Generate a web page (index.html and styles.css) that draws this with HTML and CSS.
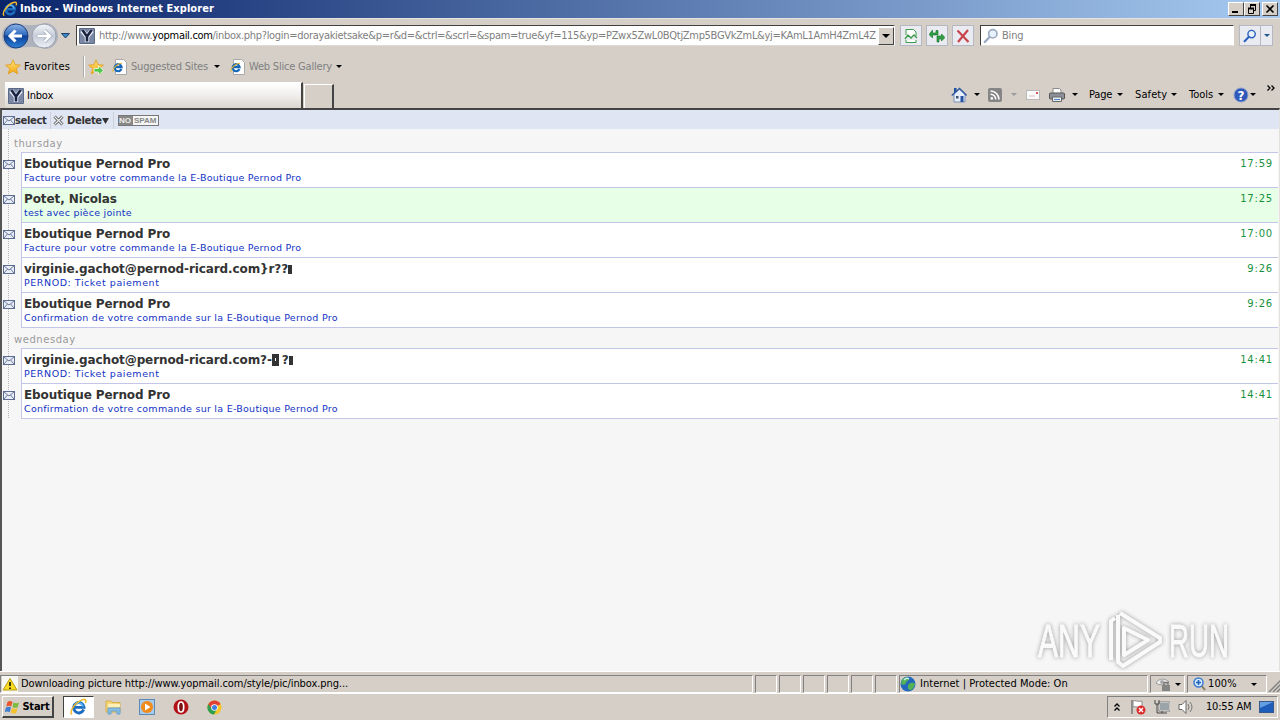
FILE: index.html
```html
<!DOCTYPE html>
<html lang="en">
<head>
    <meta charset="UTF-8">
    <meta name="viewport" content="width=device-width, initial-scale=1.0">
    <title>Inbox - Windows Internet Explorer</title>
    <link rel="stylesheet" href="styles.css">
</head>
<body>
    <!-- Shared icons -->
    <svg class="defs" width="0" height="0">
        <defs>
            <linearGradient id="blue-ball" x1="0" y1="0" x2="0" y2="1">
                <stop offset="0" stop-color="#8db4e6"/>
                <stop offset="0.45" stop-color="#2f6ac0"/>
                <stop offset="0.5" stop-color="#0d3f98"/>
                <stop offset="1" stop-color="#2c83d8"/>
            </linearGradient>
            <linearGradient id="pale-ball" x1="0" y1="0" x2="0" y2="1">
                <stop offset="0" stop-color="#f4f6fa"/>
                <stop offset="0.5" stop-color="#c5ccd8"/>
                <stop offset="1" stop-color="#eef1f6"/>
            </linearGradient>
            <linearGradient id="gold" x1="0" y1="0" x2="0" y2="1">
                <stop offset="0" stop-color="#ffe680"/>
                <stop offset="1" stop-color="#f5a40c"/>
            </linearGradient>
        </defs>
        <symbol id="ie" viewBox="0 0 16 16">
            <path d="M12.6 10.3A4.6 4.6 0 1 1 12.9 8.3H4.6" fill="none" stroke="#1d6cc0" stroke-width="2.6"/>
            <path d="M12 7.6A4 4 0 0 0 4.6 6.4" fill="none" stroke="#59b5ee" stroke-width="1.4"/>
            <path d="M2.2 14.6C-1 12 6 2.6 12.4 1.3 14.6.9 15 2.4 14 4.4" fill="none" stroke="#f0b92c" stroke-width="1.4"/>
        </symbol>
        <symbol id="ypage" viewBox="0 0 16 16">
            <rect width="16" height="16" rx="1" fill="#5c6a88"/>
            <rect x="1" y="1" width="14" height="14" fill="#7a88a6"/>
            <path d="M3 2.5L8 8.5L13 2.5M8 8V14" fill="none" stroke="#e8edf6" stroke-width="4.4"/>
            <path d="M3.4 2L8 8.5L12.6 2M8 8V13.6" fill="none" stroke="#1a2440" stroke-width="2.6"/>
        </symbol>
        <symbol id="iepage" viewBox="0 0 16 16">
            <path d="M3.5 .5h8l3 3v12h-11z" fill="#fff" stroke="#a8a8a8"/>
            <path d="M9.4 10A3.5 3.5 0 1 1 9.6 8.2H3.4" fill="none" stroke="#1767b8" stroke-width="2.2"/>
            <path d="M1.2 12.6C-.4 10 6 4 10 4.2" fill="none" stroke="#e9b32a" stroke-width="1.1"/>
        </symbol>
        <symbol id="star" viewBox="0 0 16 16">
            <path d="M8 .8l2.1 4.9 5.3.4-4 3.5 1.3 5.3L8 12l-4.7 2.9 1.3-5.3-4-3.5 5.3-.4z" fill="url(#gold)" stroke="#e09c1c" stroke-width=".8"/>
        </symbol>
        <symbol id="envelope" viewBox="0 0 12 9">
            <rect x=".5" y=".5" width="11" height="8" fill="#e8edf7" stroke="#5d6d92"/>
            <path d="M1 1l5 4 5-4M1 8l3.5-4M11 8L7.5 4" fill="none" stroke="#5d6d92" stroke-width=".9"/>
        </symbol>
        <symbol id="lens" viewBox="0 0 16 16">
            <circle cx="9.8" cy="5.8" r="4.2" fill="#e8f2fc" stroke="currentColor" stroke-width="1.6"/>
            <path d="M6.6 9L1.8 14" stroke="currentColor" stroke-width="2.4" stroke-linecap="round"/>
        </symbol>
    </svg>

    <div class="titlebar">
        <svg class="icon"><use href="#ie"/></svg>
        <span class="title">Inbox - Windows Internet Explorer</span>
        <div class="window-buttons">
            <button><svg width="12" height="10"><path d="M2 8h6" stroke="#000" stroke-width="2"/></svg></button>
            <button><svg width="12" height="10"><path d="M4 1h6M2 4.5h6" stroke="#000" stroke-width="2"/><path d="M4.5 1v3M9.5 1v5.5H8M2.5 4v5.5h5V4" fill="none" stroke="#000"/></svg></button>
            <button class="close"><svg width="12" height="10"><path d="M2.5 1.5l7 7M9.5 1.5l-7 7" stroke="#000" stroke-width="1.6"/></svg></button>
        </div>
    </div>

    <div class="navbar">
        <svg class="travel" width="58" height="28" viewBox="0 0 58 28">
            <path d="M13 1C26 4 32 4 43 1A13 13 0 0 1 43 27C32 24 26 24 13 27A13 13 0 0 1 13 1" fill="#aeb2bd"/>
            <circle cx="14" cy="14" r="12" fill="url(#blue-ball)" stroke="#1f3f7c"/>
            <path d="M20 14H9M13.500 8.500L8 14l5.500 5.500" fill="none" stroke="#fff" stroke-width="3"/>
            <circle cx="42" cy="14" r="12" fill="url(#pale-ball)" stroke="#9aa0ae"/>
            <path d="M36 14h11M42.500 8.500L48 14l-5.500 5.500" fill="none" stroke="#a9b1c0" stroke-width="4"/>
            <path d="M36 14h11M42.500 8.500L48 14l-5.500 5.500" fill="none" stroke="#fff" stroke-width="2.400"/>
        </svg>
        <svg class="recent" width="10" height="6"><path d="M.5.500h8L4.500 5z" fill="#3c86c4" stroke="#1c466f"/></svg>
        <div class="address">
            <svg class="icon"><use href="#ypage"/></svg>
            <span class="url">http://www.<b>yopmail.com</b>/inbox.php?login=dorayakietsake&amp;p=r&amp;d=&amp;ctrl=&amp;scrl=&amp;spam=true&amp;yf=115&amp;yp=PZwx5ZwL0BQtjZmp5BGVkZmL&amp;yj=KAmL1AmH4ZmL4Z</span>
            <button class="drop"><i class="arrow"></i></button>
        </div>
        <button class="nav-button"><svg class="icon" viewBox="0 0 16 16"><path d="M3 7V1.500h7.500L13 4v4M3 12v2.500h10V12" fill="#fff" stroke="#3c9a4a"/><path d="M2 11l3-4 3 3 3-3 3 3" fill="none" stroke="#3c9a4a" stroke-width="1.300"/></svg></button>
        <button class="nav-button"><svg class="icon" viewBox="0 0 16 16"><path d="M0 6.500L3.500 2v3H7V2.500h2V7H3.500v3zM16 9.500L12.500 6v2H8v6h2v-3h2.500v2z" fill="#2fa044" stroke="#16702a" stroke-width=".6"/></svg></button>
        <button class="nav-button"><svg class="icon" viewBox="0 0 16 16"><path d="M2.500 2.500l11 11.500M13 2L3 14" stroke="#c8434a" stroke-width="2.200"/></svg></button>
        <div class="search">
            <svg class="icon"><use href="#lens"/></svg>
            <span>Bing</span>
        </div>
        <button class="nav-button go"><svg class="icon"><use href="#lens"/></svg></button>
        <button class="nav-button more"><i class="arrow"></i></button>
    </div>

    <div class="favorites">
        <svg class="icon"><use href="#star"/></svg>
        <span class="fav-label">Favorites</span>
        <i class="divider"></i>
        <svg class="icon add" viewBox="0 0 16 16"><use href="#star"/><path d="M6 9.500h4.500V7l5 4.500-5 4.500v-3H6z" fill="#4fc94b" stroke="#fff" stroke-width=".7"/></svg>
        <svg class="icon sites-icon"><use href="#iepage"/></svg>
        <span class="sites">Suggested Sites</span><i class="arrow"></i>
        <svg class="icon slices-icon"><use href="#iepage"/></svg>
        <span class="slices">Web Slice Gallery</span><i class="arrow"></i>
    </div>

    <div class="tabs">
        <div class="tab">
            <svg class="icon"><use href="#ypage"/></svg>
            <span>Inbox</span>
        </div>
        <div class="new-tab"></div>
        <div class="commands">
            <svg class="icon home" viewBox="0 0 16 16"><path d="M3 7v8h11V7L8.500 2z" fill="#e6effb" stroke="#7c8fb8"/><path d="M.8 8.500L8.500 1.500 15.500 8.500" fill="none" stroke="#355a9e" stroke-width="1.600"/><path d="M3 1h2.500v3L3 6zM9.500 9h3v6h-3z" fill="#2452a0"/><path d="M5 9h2.500v2.500H5z" fill="#3c4e78"/></svg><i class="arrow a1"></i>
            <svg class="feed" width="14" height="14" viewBox="0 0 14 14"><rect width="14" height="14" rx="2" fill="#858585"/><circle cx="3.800" cy="10.400" r="1.300" fill="#fff"/><path d="M2.500 6.300a5 5 0 0 1 5.200 5.200M2.500 3a8.500 8.500 0 0 1 8.500 8.500" fill="none" stroke="#fff" stroke-width="1.600"/></svg><i class="arrow dim a2"></i>
            <svg class="mail" width="14" height="10"><rect x=".5" y=".5" width="13" height="9" fill="#fafafa" stroke="#b9b9b9"/><path d="M3 6h6" stroke="#e0c0c0"/><path d="M10 2h2v2h-2z" fill="#cc5a5a"/></svg>
            <svg class="icon print" viewBox="0 0 16 16"><path d="M4 6V1.500h6.500L12 3v3" fill="#fff" stroke="#8a8a8a"/><rect x=".5" y="6" width="15" height="6" rx="1" fill="#8b9098" stroke="#555"/><path d="M3.500 10h9v4.500h-9z" fill="#e9eef4" stroke="#666"/><path d="M5 12.500h6" stroke="#4a86c8"/></svg><i class="arrow a3"></i>
            <span class="page">Page</span><i class="arrow a4"></i>
            <span class="safety">Safety</span><i class="arrow a5"></i>
            <span class="tools">Tools</span><i class="arrow a6"></i>
            <svg class="icon help" viewBox="0 0 16 16"><circle cx="8" cy="8" r="7" fill="#2f58bb" stroke="#8a9ccc"/><text x="8" y="12.500" text-anchor="middle">?</text></svg><i class="arrow a7"></i>
            <svg class="chevrons" width="8" height="6"><path d="M.5.500L3 3 .5 5.500M4.500.500L7 3 4.500 5.500" fill="none" stroke="#000" stroke-width="1.300"/></svg>
        </div>
    </div>

    <main class="viewport">
        <div class="mail-toolbar">
            <svg class="env"><use href="#envelope"/></svg>
            <b class="select">select</b>
            <i class="sep"></i>
            <svg class="cross" width="11" height="11"><path d="M1.500 1.500l8 8M9.500 1.500l-8 8" stroke="#555" stroke-width="3"/><path d="M1.500 1.500l8 8M9.500 1.500l-8 8" stroke="#eee" stroke-width="1.200"/></svg>
            <b class="delete">Delete</b>
            <svg class="down" width="7" height="6"><path d="M0 0h7L3.500 6z" fill="#333"/></svg>
            <i class="sep"></i>
            <span class="nospam"><span>NO</span><em>SPAM</em></span>
        </div>
        <div class="list">
            <h2>thursday</h2>
            <div class="message">
                <svg class="env"><use href="#envelope"/></svg>
                <div class="body"><b>Eboutique Pernod Pro</b><time>17:59</time><p>Facture pour votre commande la E-Boutique Pernod Pro</p></div>
            </div>
            <div class="message active">
                <svg class="env"><use href="#envelope"/></svg>
                <div class="body"><b>Potet, Nicolas</b><time>17:25</time><p>test avec pièce jointe</p></div>
            </div>
            <div class="message">
                <svg class="env"><use href="#envelope"/></svg>
                <div class="body"><b>Eboutique Pernod Pro</b><time>17:00</time><p>Facture pour votre commande la E-Boutique Pernod Pro</p></div>
            </div>
            <div class="message">
                <svg class="env"><use href="#envelope"/></svg>
                <div class="body"><b>virginie.gachot@pernod-ricard.com}r??<i class="bar"></i></b><time>9:26</time><p class="ticket">PERNOD: Ticket paiement</p></div>
            </div>
            <div class="message last">
                <svg class="env"><use href="#envelope"/></svg>
                <div class="body"><b>Eboutique Pernod Pro</b><time>9:26</time><p>Confirmation de votre commande sur la E-Boutique Pernod Pro</p></div>
            </div>
            <h2 class="second">wednesday</h2>
            <div class="message">
                <svg class="env"><use href="#envelope"/></svg>
                <div class="body"><b>virginie.gachot@pernod-ricard.com?-<i class="box"></i>?<i class="bar"></i></b><time>14:41</time><p class="ticket">PERNOD: Ticket paiement</p></div>
            </div>
            <div class="message last">
                <svg class="env"><use href="#envelope"/></svg>
                <div class="body"><b>Eboutique Pernod Pro</b><time>14:41</time><p>Confirmation de votre commande sur la E-Boutique Pernod Pro</p></div>
            </div>
        </div>
        <svg class="watermark" width="216" height="66" viewBox="0 0 216 66">
            <text x="7" y="49" textLength="62" lengthAdjust="spacingAndGlyphs">ANY</text>
            <text x="138" y="49" textLength="60" lengthAdjust="spacingAndGlyphs">RUN</text>
            <path d="M80 52V13l4-3M89 5l40 25v4L92 58l-5-4V7M93 47V20l24 12z"/>
        </svg>
    </main>

    <div class="statusbar">
        <div class="pane message-pane">
            <svg class="icon" viewBox="0 0 16 16"><path d="M0 0h16v16H0z" fill="#f8f8f2"/><path d="M8 2.500L15 14H1z" fill="#f8dc20" stroke="#b99a12"/><path d="M8 6v4M8 11.500v1.500" stroke="#000" stroke-width="1.500"/></svg>
            <span class="status-text">Downloading picture http://www.yopmail.com/style/pic/inbox.png...</span>
        </div>
        <div class="pane small"></div>
        <div class="pane small"></div>
        <div class="pane small"></div>
        <div class="pane small"></div>
        <div class="pane small"></div>
        <div class="pane small"></div>
        <div class="pane zone">
            <svg class="icon" viewBox="0 0 16 16"><circle cx="8" cy="8" r="7.500" fill="#2468bd"/><path d="M2 4c3-4 7-3 7-1s-3 2-3 4-4 2-5 1zM9 8c3-2 5-1 6 0-1 4-3 6-5 6s-3-4-1-6z" fill="#54b455"/><path d="M4 4c2-2 4-2 5-1" fill="none" stroke="#c4f0e8" stroke-width="1.300"/></svg>
            <span>Internet | Protected Mode: On</span>
        </div>
        <div class="pane filter">
            <svg class="icon" viewBox="0 0 16 16"><path d="M1 7c3-5 9-5 13-1-3 3-9 4-13 1z" fill="#eee" stroke="#999"/><circle cx="7" cy="6" r="2" fill="#aaa"/><rect x="7" y="9" width="8" height="6" fill="#858585"/><path d="M9 9V6.500h4V9" fill="none" stroke="#777" stroke-width="1.400"/></svg>
            <i class="arrow"></i>
        </div>
        <div class="pane zoom">
            <svg width="13" height="14" viewBox="0 0 13 14"><path d="M8 8l4 5" stroke="#8a7a5c" stroke-width="2"/><circle cx="5.500" cy="5.500" r="4.500" fill="#d8ecff" stroke="#3d7ccc" stroke-width="1.500"/><path d="M5.500 3v5M3 5.500h5" stroke="#1f5fb8" stroke-width="1.600"/></svg>
            <span>100%</span>
            <i class="arrow"></i>
        </div>
        <svg class="grip" width="13" height="13"><path d="M1 13L13 1M5 13L13 5M9 13l4-4" stroke="#808080" stroke-width="1.500"/></svg>
    </div>

    <div class="taskbar">
        <button class="start">
            <svg class="icon" viewBox="0 0 16 16"><path d="M2.500 3c2-1.500 3.500-1 5 0L6.200 7.500C4.700 6.500 3 6.500 1.200 7.500z" fill="#e8562a"/><path d="M8.500 3.500c2 1 3.500 1 5.500 0l-1.300 4.700c-2 1-3.500.8-5.200-.2z" fill="#7dbb3c"/><path d="M1 8.500c2-1 3.500-1 5 0l-1.300 4.700c-1.700-1-3.200-1-5 0z" fill="#3f7ed0"/><path d="M7 9c2 1 3.500 1.200 5.500.2L11.200 14c-2 1-3.500.6-5.500-.4z" fill="#f6c12b"/></svg>
            <b>Start</b>
        </button>
        <div class="task-ie"><svg width="19" height="18"><use href="#ie"/></svg></div>
        <svg class="task explorer" width="17" height="16" viewBox="0 0 17 16"><path d="M1 2h5l1 1.500h8V13H1z" fill="#f4d676" stroke="#d5ae4c"/><path d="M3 5h12v3H3z" fill="#fbf0b8"/><path d="M3 9h12v6h-3v-3H6v3H3z" fill="#84bde5" stroke="#6aa3cd"/></svg>
        <svg class="task player" width="16" height="16"><rect x=".5" y=".5" width="15" height="15" fill="#a9cbe9" stroke="#5b8ab8"/><circle cx="8" cy="8" r="6" fill="#f08a18"/><path d="M6 4.500v7L11.500 8z" fill="#fff"/></svg>
        <svg class="task opera" width="16" height="16"><circle cx="8" cy="8" r="7.500" fill="#b31217"/><ellipse cx="8" cy="8" rx="2.700" ry="5" fill="#781014" stroke="#fff" stroke-width="1.700"/></svg>
        <svg class="task chrome" width="15" height="15"><circle cx="7.500" cy="7.500" r="7" fill="#f5c52a"/><path d="M1.500 4A7 7 0 0 1 13.500 4L7.500 7.500z" fill="#df3f32"/><path d="M1.300 4A7 7 0 0 0 7 14.500l3-5.500-5-1z" fill="#2f9e50"/><path d="M1.300 4L5 9l2-5z" fill="#df3f32"/><circle cx="7.500" cy="7.500" r="3.300" fill="#fff"/><circle cx="7.500" cy="7.500" r="2.500" fill="#3f7fe0"/></svg>
        <div class="tray">
            <svg class="up" width="6" height="8"><path d="M.5 3.500L3 1l2.500 2.500M.5 7.500L3 5l2.500 2.500" fill="none" stroke="#000" stroke-width="1.300"/></svg>
            <svg class="icon flag" viewBox="0 0 16 16"><path d="M2 1v14" stroke="#777" stroke-width="1.500"/><path d="M3 2c3-1 4 1 9 0v6c-4 1-6-1-9 0z" fill="#fff" stroke="#8c8c8c"/><circle cx="11" cy="11" r="4.500" fill="#dc2b2b"/><path d="M9 9l4 4M13 9l-4 4" stroke="#fff" stroke-width="1.400"/></svg>
            <svg class="icon network" viewBox="0 0 16 16"><rect x="5.500" y="3.500" width="10" height="8" fill="#9ba4a8" stroke="#fff"/><rect x="5" y="3" width="11" height="9" fill="none" stroke="#555" stroke-width=".7"/><path d="M1 1v4h4V1M3 5v9h10M8 12v2" fill="none" stroke="#444"/></svg>
            <svg class="icon sound" viewBox="0 0 16 16"><path d="M1 5.500h3L8 1.500v13l-4-4H1z" fill="#fff" stroke="#666"/><path d="M10 5q2 3 0 6M12 3q4 5 0 10" fill="none" stroke="#777"/></svg>
            <span class="clock">10:55 AM</span>
            <svg class="desktop" width="15" height="12"><rect x=".5" y=".5" width="14" height="11" fill="#1f5dba" stroke="#35598c"/><path d="M1 1h13L1 7z" fill="#649fe2"/></svg>
        </div>
    </div>
</body>
</html>
```
FILE: styles.css
```css
* {
    box-sizing: border-box;
}

body {
    margin: 0;
    width: 1280px;
    height: 720px;
    overflow: hidden;
    display: flex;
    flex-direction: column;
    font-family: "DejaVu Sans Condensed", "DejaVu Sans", sans-serif;
    font-stretch: condensed;
    font-size: 11px;
    letter-spacing: -0.2px;
    line-height: 14px;
    background: #d5cfc8;
    color: #000;
    white-space: nowrap;
}

svg,
span,
b,
i,
button {
    flex-shrink: 0;
}

svg {
    display: block;
}

.defs {
    position: absolute;
}

button {
    display: flex;
    align-items: center;
    justify-content: center;
    padding: 0;
    margin: 0;
    font: inherit;
    letter-spacing: inherit;
    background: #d5cfc8;
    border: 1px solid;
    border-color: #fff #444 #444 #fff;
}

.icon {
    width: 16px;
    height: 16px;
}

.arrow {
    width: 0;
    height: 0;
    border: 3px solid transparent;
    border-top-color: #000;
    border-bottom: 0;
}

.arrow.dim {
    border-top-color: #9a9a9a;
}

/* Title bar */
.titlebar {
    height: 18px;
    display: flex;
    align-items: center;
    padding-left: 2px;
    background: linear-gradient(to right, #0a246a, #a6caf0);
    color: #fff;
    font-weight: bold;
}

.title {
    margin-left: 2px;
    letter-spacing: 0.07px;
}

.window-buttons {
    display: flex;
    margin-left: auto;
    padding-right: 2px;
}

.window-buttons button {
    width: 16px;
    height: 14px;
}

.window-buttons .close {
    margin-left: 2px;
}

/* Navigation */
.navbar {
    height: 36px;
    display: flex;
    align-items: flex-start;
    padding: 6px 0 0 2px;
    border-top: 1px solid #e5e3e1;
}

.travel {
    margin-top: -3px;
}

.recent {
    margin: 8px 0 0 1px;
}

.address {
    width: 819px;
    height: 21px;
    margin-left: 5px;
    display: flex;
    align-items: center;
    padding-left: 2px;
    background: #fff;
    border: 1px solid;
    border-color: #404040 #fff #dedad4 #404040;
    color: #808080;
}

.url {
    width: 779px;
    margin-left: 4px;
    letter-spacing: -0.31px;
}

.url b {
    color: #000;
    font-weight: normal;
}

.drop {
    width: 16px;
    height: 18px;
}

.drop .arrow {
    border-width: 4px 4px 0;
}

.nav-button {
    width: 22px;
    height: 21px;
    margin-left: 4px;
    background: #e9ebf0;
    border-color: #b5b8c2;
}

.address + .nav-button {
    margin-left: 5px;
}

.search {
    width: 254px;
    height: 21px;
    margin-left: 6px;
    display: flex;
    align-items: center;
    padding-left: 2px;
    background: #fff;
    border: 1px solid;
    border-color: #404040 #fff #dedad4 #404040;
    color: #808080;
}

.search .icon {
    color: #9aabc0;
}

.search span {
    margin-left: 3px;
}

.nav-button.go {
    margin-left: 5px;
    color: #2a5fc0;
}

.go .icon {
    width: 14px;
    height: 14px;
}

.nav-button.more {
    width: 13px;
    margin-left: -1px;
}

.more .arrow {
    border-top-color: #24588c;
}

/* Favorites bar */
.favorites {
    height: 28px;
    display: flex;
    align-items: center;
    padding: 0 0 3px 5px;
    color: #808080;
}

.fav-label {
    width: 59px;
    margin-left: 3px;
    letter-spacing: 0.15px;
    color: #000;
}

.divider {
    width: 2px;
    height: 21px;
    background: #aaa;
    border-right: 1px solid #fff;
}

.add {
    margin-left: 3px;
}

.sites-icon {
    margin-left: 8px;
}

.sites {
    width: 79px;
    margin: 0 4px 0 3px;
}

.slices-icon {
    margin-left: 10px;
}

.slices {
    width: 83px;
    margin: 0 4px 0 3px;
}

/* Tabs */
.tabs {
    height: 26px;
    display: flex;
    padding-left: 5px;
}

.tab {
    width: 298px;
    height: 26px;
    display: flex;
    align-items: center;
    padding: 1px 0 0 3px;
    background: linear-gradient(to bottom, #fff, #f0eeec 50%, #dad5ce);
    border-top: 1px solid #fff;
    border-right: 2px solid #444;
}

.tab span {
    margin-left: 3px;
}

.new-tab {
    width: 30px;
    height: 24px;
    margin: 2px 0 0 1px;
    border: 1px solid #fff;
    border-right: 2px solid #444;
    border-bottom: 0;
}

.commands {
    display: flex;
    align-items: center;
    height: 25px;
    margin-left: 617px;
}

.a1 {
    margin: 0 8px 0 7px;
}

.a2 {
    margin: 0 9px;
}

.print {
    margin-left: 9px;
}

.a3 {
    margin: 0 11px 0 7px;
}

.page {
    width: 25px;
}

.a4 {
    margin: 0 12px 0 3px;
}

.safety {
    width: 33px;
    letter-spacing: 0.1px;
}

.a5 {
    margin: 0 12px 0 3px;
}

.tools {
    width: 26px;
    letter-spacing: 0;
}

.a6 {
    margin: 0 9px 0 3px;
}

.help text {
    font: bold 12px "DejaVu Sans", sans-serif;
    fill: #fff;
}

.a7 {
    margin: 0 11px 0 1px;
}

.chevrons {
    margin-bottom: 13px;
}

/* Mail page */
.viewport {
    position: relative;
    height: 563px;
    border-top: 2px solid #444;
    border-left: 2px solid #555;
    border-right: 1px solid #e4e1dc;
    background: #f6f6f7;
    font-family: "DejaVu Sans", sans-serif;
    font-stretch: normal;
    letter-spacing: 0;
    color: #333;
}

.mail-toolbar {
    height: 19px;
    display: flex;
    align-items: center;
    padding-top: 2px;
    background: #dfe5f3;
    font-size: 10px;
}

.env {
    width: 12px;
    height: 9px;
    margin-left: 1px;
}

.select,
.delete {
    letter-spacing: -0.35px;
}

.select {
    width: 33px;
}

.sep {
    width: 1px;
    height: 17px;
    margin: 0 4px 0 2px;
    background: #ccd0da;
}

.cross {
    margin-left: -2px;
}

.delete {
    width: 34px;
    margin: 0 2px 0 3px;
}

.down {
    margin: 0 2px 0 -1px;
}

.nospam {
    display: flex;
    width: 41px;
    height: 11px;
    border: 1px solid #777;
    background: #f5f5f5;
    font: bold 8px/9px "Liberation Sans", Arial, sans-serif;
    color: #888;
}

.nospam span {
    width: 14px;
    background: #888;
    color: #eee;
}

.nospam em {
    margin-left: 1px;
    font-style: normal;
}

.list {
    height: 289px;
    margin-right: 1px;
    background: linear-gradient(#b8b8b8 50%, transparent 50%) 6px 0 / 1px 2px repeat-y;
}

.list h2 {
    height: 23px;
    margin: 0;
    padding: 8px 0 0 12px;
    font-size: 10px;
    font-weight: normal;
    letter-spacing: 0.55px;
    color: #999;
}

.list h2.second {
    height: 20px;
    padding-top: 5px;
}

.message {
    display: flex;
    height: 35px;
}

.message .env {
    margin-top: 8px;
}

.message .body {
    flex: 1;
    display: grid;
    grid-template-columns: 1fr auto;
    grid-template-rows: 19px 14px;
    margin-left: 6px;
    padding: 0 5px 0 2px;
    border: 1px solid #c3c6e6;
    border-width: 1px 0 0 1px;
    background: #fff;
}

.message.last {
    height: 36px;
    margin-bottom: 0;
}

.message.last .body {
    border-bottom-width: 1px;
}

.message.active .body {
    background: #e6ffe6;
}

.body b {
    display: flex;
    align-items: center;
    padding-top: 3px;
    font-size: 12px;
    letter-spacing: -0.1px;
}

.body time {
    padding-top: 4px;
    font-size: 10px;
    letter-spacing: 0.8px;
    color: #18913c;
}

.body p {
    margin: -1px 0 0;
    font-size: 9.500px;
    letter-spacing: 0.260px;
    color: #1232c4;
}

.body p.ticket {
    letter-spacing: 0.55px;
}

.bar {
    width: 4px;
    height: 9px;
    background: #333;
}

.box {
    width: 7px;
    height: 12px;
    margin-right: 3px;
    border: 3px solid #333;
    border-width: 4px 3px 5px;
    background: #fff;
}

.watermark {
    position: absolute;
    left: 1029px;
    top: 498px;
    filter: drop-shadow(0 0 2px #999);
}

.watermark text {
    font: 46px "Liberation Sans", Arial, sans-serif;
    fill: #fafafa;
    stroke: #fafafa;
    stroke-width: 1px;
}

.watermark path {
    fill: none;
    stroke: #fafafa;
    stroke-width: 4px;
    stroke-linejoin: round;
}

/* Status bar */
.statusbar {
    height: 22px;
    display: flex;
    gap: 2px;
    padding: 3px 0 1px;
    border-top: 1px solid #fff;
}

.pane {
    display: flex;
    align-items: center;
    flex-shrink: 0;
    height: 18px;
    border: 1px solid;
    border-color: #808080 #fff #fff #808080;
}

.message-pane {
    width: 753px;
    padding-left: 1px;
}

.status-text {
    margin-left: 3px;
    letter-spacing: -0.08px;
}

.small {
    width: 22px;
}

.zone {
    width: 249px;
}

.zone span {
    margin-left: 4px;
    letter-spacing: 0.03px;
}

.filter {
    width: 35px;
    padding-left: 4px;
    gap: 4px;
}

.zoom {
    width: 80px;
    padding-left: 5px;
}

.zoom span {
    width: 30px;
    margin: 0 13px 0 2px;
    letter-spacing: 0.1px;
}

.grip {
    margin: 4px 0 0 -1px;
}

/* Taskbar */
.taskbar {
    height: 27px;
    display: flex;
    align-items: center;
    padding: 0 2px;
    border-top: 1px solid #fff;
}

.start {
    width: 52px;
    height: 22px;
    border-width: 1px 2px 2px 1px;
}

.start b {
    margin-left: 1px;
}

.task-ie {
    width: 31px;
    height: 22px;
    margin-left: 9px;
    display: flex;
    align-items: center;
    justify-content: center;
    background: #fff;
    border: 1px solid;
    border-color: #404040 #fff #fff #404040;
}

.explorer {
    margin-left: 11px;
}

.player {
    margin-left: 17px;
}

.opera {
    margin-left: 18px;
}

.chrome {
    margin-left: 18px;
}

.tray {
    display: flex;
    align-items: center;
    width: 171px;
    height: 22px;
    margin-left: auto;
    padding-left: 6px;
    border: 1px solid;
    border-color: #808080 #fff #fff #808080;
}

.flag {
    margin-left: 10px;
}

.network,
.sound {
    margin-left: 8px;
}

.clock {
    width: 47px;
    margin: 0 6px 0 12px;
}
```
